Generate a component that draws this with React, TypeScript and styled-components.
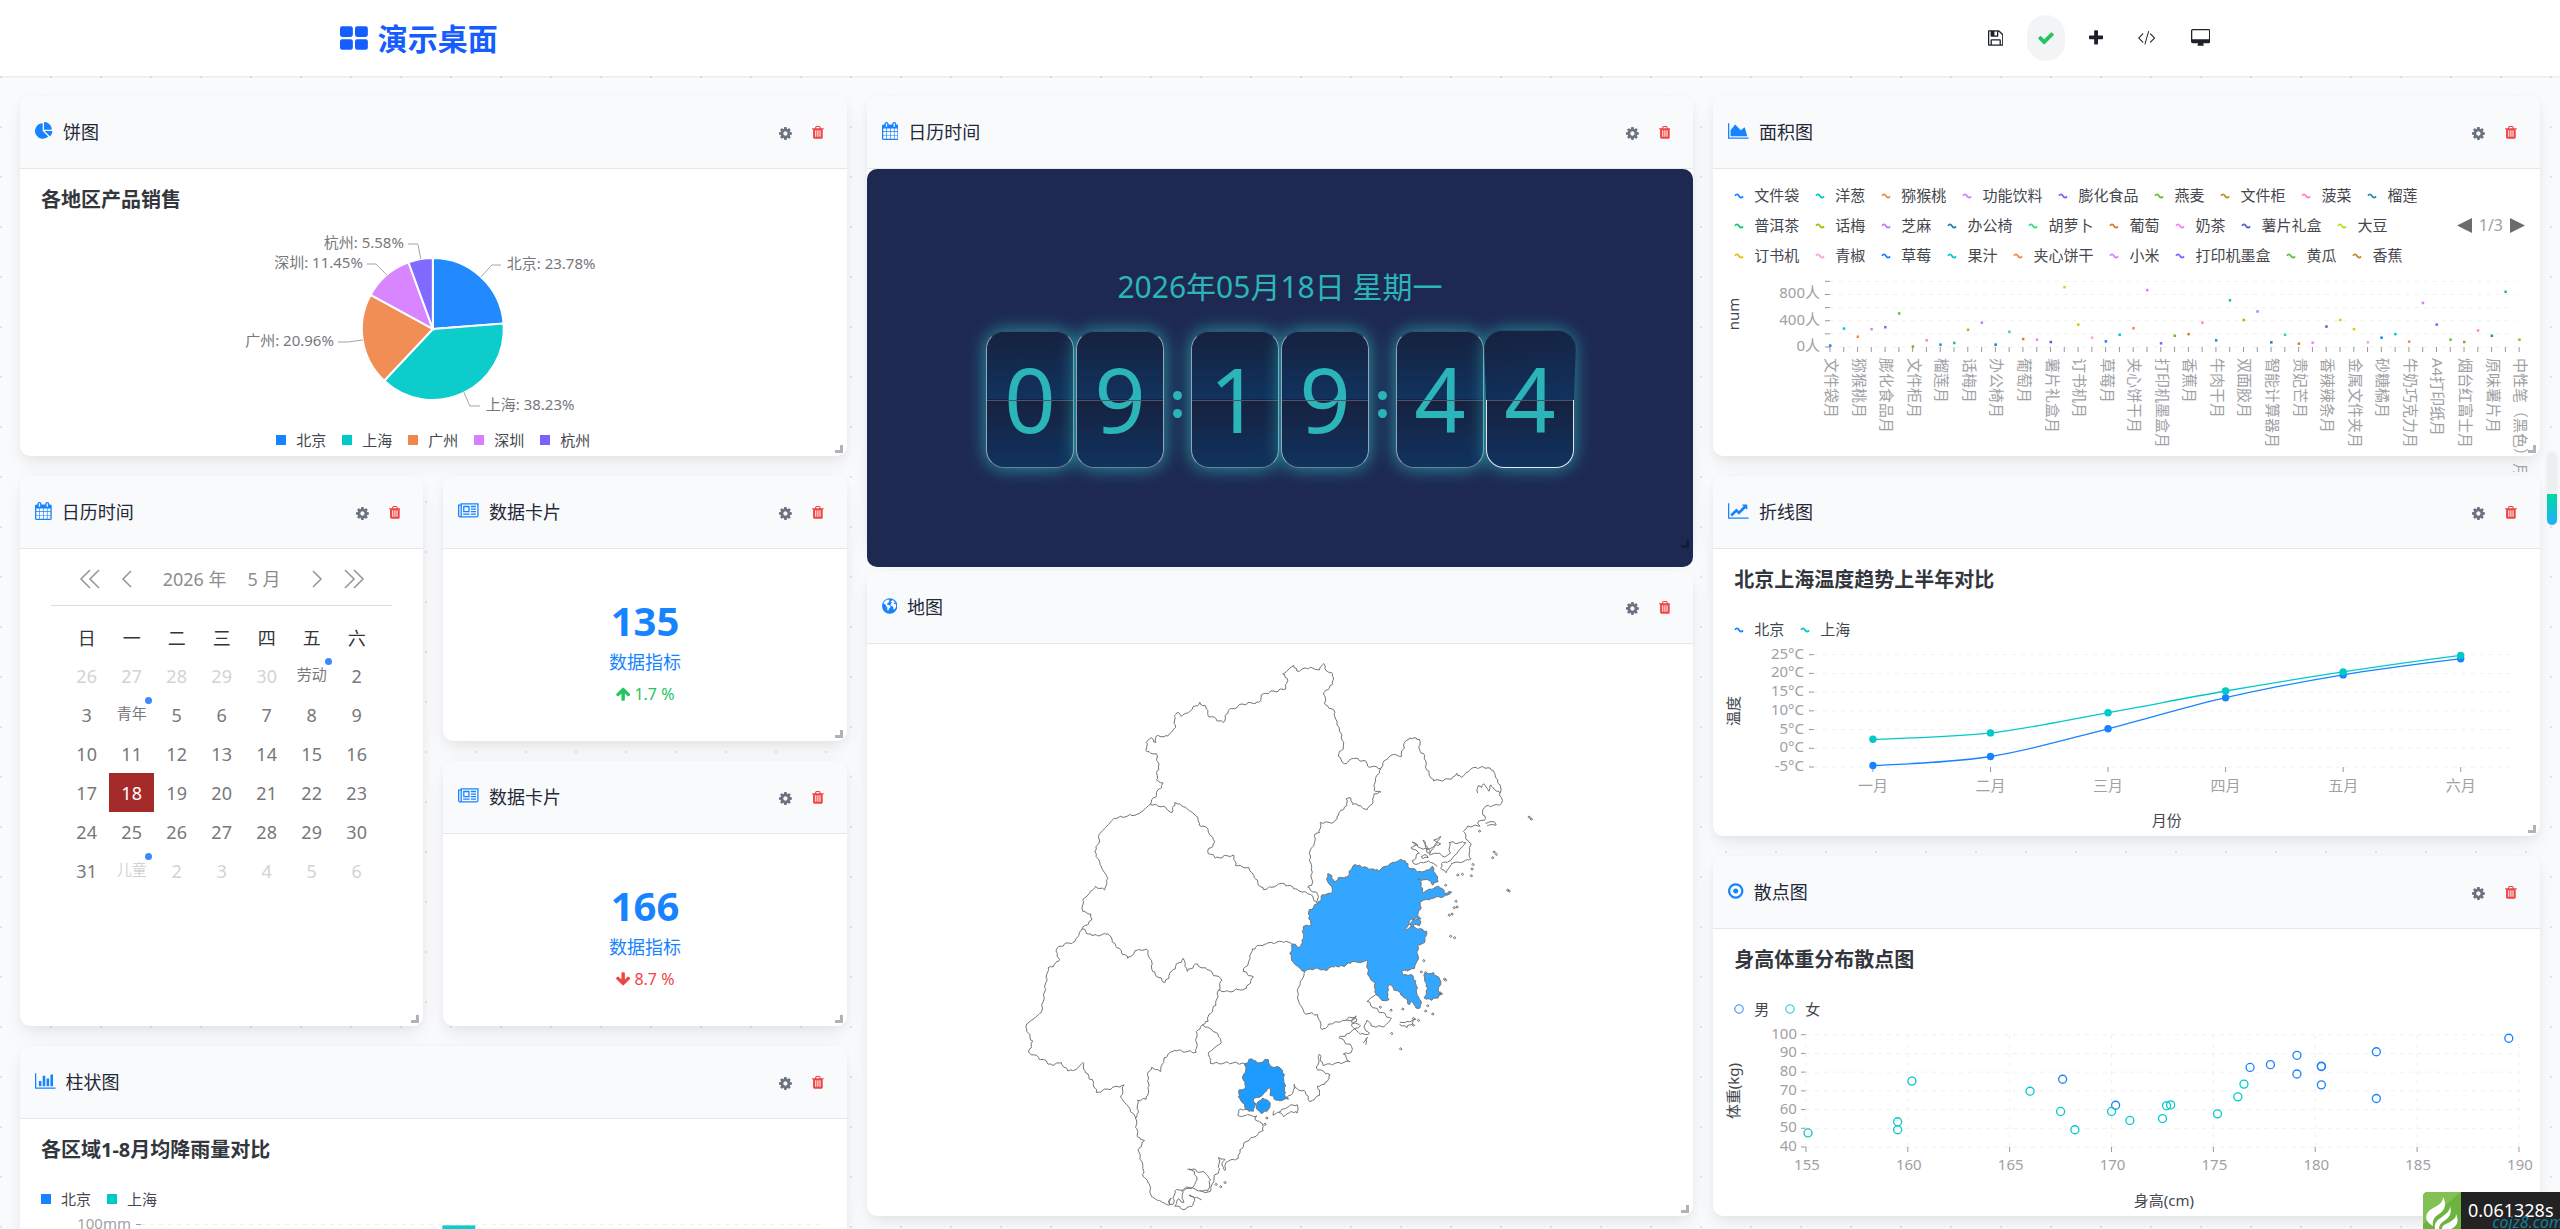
import { styled, createGlobalStyle, css } from 'styled-components';
import { useState } from 'react';
import type { ReactNode } from 'react';

const GlobalStyle = createGlobalStyle`
    * {
        box-sizing: border-box;
    }

    body {
        margin: 0;
        font-family: 'Noto Sans', 'Noto Sans CJK SC', sans-serif;
        font-size: 18px;
        color: #1f2937;
        background: #f9fafb;
    }

    button {
        border: none;
        background: none;
        padding: 0;
        font: inherit;
        color: inherit;
        cursor: pointer;
    }
`;

const BLUE = '#1783ff';
const TEAL = '#00c9c9';

const PALETTE = [
    '#1783ff', '#00c9c9', '#f0884d', '#d580ff', '#7863ff',
    '#60c42d', '#bd8f24', '#ff80ca', '#2491b3', '#17c76f',
    '#aaba01', '#bc7cfc', '#237cbc', '#2de379', '#ce8032',
    '#ff7af4', '#545fd3', '#afe410', '#d8c608', '#ffa1e0',
];

/* ---------- icons ---------- */

const ICONS = {
    calendar: { w: 1664, d: 'M128 1664h288v-288h-288v288zm352 0h320v-288h-320v288zm-352-352h288v-320h-288v320zm352 0h320v-320h-320v320zm-352-384h288v-288h-288v288zm736 736h320v-288h-320v288zm-384-736h320v-288h-320v288zm768 736h288v-288h-288v288zm-384-352h320v-320h-320v320zm-352-864v-288q0-13-9.5-22.5t-22.5-9.5h-64q-13 0-22.5 9.5t-9.5 22.5v288q0 13 9.5 22.5t22.5 9.5h64q13 0 22.5-9.5t9.5-22.5zm736 864h288v-320h-288v320zm-384-384h320v-288h-320v288zm384 0h288v-288h-288v288zm32-480v-288q0-13-9.5-22.5t-22.5-9.5h-64q-13 0-22.5 9.5t-9.5 22.5v288q0 13 9.5 22.5t22.5 9.5h64q13 0 22.5-9.5t9.5-22.5zm384-64v1280q0 52-38 90t-90 38h-1408q-52 0-90-38t-38-90v-1280q0-52 38-90t90-38h128v-96q0-66 47-113t113-47h64q66 0 113 47t47 113v96h384v-96q0-66 47-113t113-47h64q66 0 113 47t47 113v96h128q52 0 90 38t38 90z' },
    area: { w: 2048, d: 'M2048 1536v128h-2048v-1536h128v1408h1920zm-384-1024l256 896h-1664v-576l448-576 576 576z' },
    line: { w: 2048, d: 'M2048 1536v128h-2048v-1536h128v1408h1920zm-128-1248v435q0 21-19.5 29.5t-35.5-7.5l-121-121-633 633q-10 10-23 10t-23-10l-233-233-416 416-192-192 585-585q10-10 23-10t23 10l233 233 464-464-121-121q-16-16-7.5-35.5t29.5-19.5h435q14 0 23 9t9 23z' },
    bar: { w: 2048, d: 'M640 896v512h-256v-512h256zm384-512v1024h-256v-1024h256zm1024 1152v128h-2048v-1536h128v1408h1920zm-640-896v768h-256v-768h256zm384-384v1152h-256v-1152h256z' },
    pie: { w: 1792, d: 'M768 890l546 546q-106 108-247.5 168t-298.5 60q-209 0-385.5-103t-279.5-279.5-103-385.5 103-385.5 279.5-279.5 385.5-103v762zm187 6h773q0 157-60 298.5t-168 247.5zm709-128h-768v-768q209 0 385.5 103t279.5 279.5 103 385.5z' },
    news: { w: 2048, d: 'M1024 512h-384v384h384v-384zm128 640v128h-640v-128h640zm0-768v640h-640v-640h640zm640 768v128h-512v-128h512zm0-256v128h-512v-128h512zm0-256v128h-512v-128h512zm0-256v128h-512v-128h512zm-1536 960v-960h-128v960q0 26 19 45t45 19 45-19 19-45zm1664 0v-1088h-1536v1088q0 33-11 64h1483q26 0 45-19t19-45zm128-1216v1216q0 80-56 136t-136 56h-1664q-80 0-136-56t-56-136v-1088h256v-128h1792z' },
    dot: { w: 1536, d: 'M1024 896q0 106-75 181t-181 75-181-75-75-181 75-181 181-75 181 75 75 181zm-256-544q-148 0-273 73t-198 198-73 273 73 273 198 198 273 73 273-73 198-198 73-273-73-273-198-198-273-73zm768 544q0 209-103 385.5t-279.5 279.5-385.5 103-385.5-103-279.5-279.5-103-385.5 103-385.5 279.5-279.5 385.5-103 385.5 103 279.5 279.5 103 385.5z' },
    globe: { w: 1536, d: 'M768 128a768 768 0 1 0 0 1536a768 768 0 1 0 0-1536zM560 250l150 20 40 90-70 60 60 70-110 50-90 100-60 90 120 60 130 10 130 110-40 140-110 90-60 170-70 60-60-130 10-190-120-120-20-130-150-110-80-30q40-270 400-410zM1010 270q250 110 330 330l-60 30-40-80-90 30 30 90 130 30 80 30 20 170-60 190-120 160-90-40-20-200-60-100-150-10-60-110 70-160 90-60-80-70-60 30 20-110 100-40z' },
    trash: { w: 1408, d: 'M512 1248v-704q0-14-9-23t-23-9h-64q-14 0-23 9t-9 23v704q0 14 9 23t23 9h64q14 0 23-9t9-23zm256 0v-704q0-14-9-23t-23-9h-64q-14 0-23 9t-9 23v704q0 14 9 23t23 9h64q14 0 23-9t9-23zm256 0v-704q0-14-9-23t-23-9h-64q-14 0-23 9t-9 23v704q0 14 9 23t23 9h64q14 0 23-9t9-23zm-544-992h448l-48-117q-7-9-17-11h-317q-10 2-17 11zm928 32v64q0 14-9 23t-23 9h-96v948q0 83-47 143.5t-113 60.5h-832q-66 0-113-58.5t-47-141.5v-952h-96q-14 0-23-9t-9-23v-64q0-14 9-23t23-9h309l70-167q15-37 54-63t79-26h320q40 0 79 26t54 63l70 167h309q14 0 23 9t9 23z' },
    cog: { w: 1536, d: 'M1024 896q0-106-75-181t-181-75-181 75-75 181 75 181 181 75 181-75 75-181zm512-109v222q0 12-8 23t-20 13l-185 28q-19 54-39 91 35 50 107 138 10 12 10 25t-9 23q-27 37-99 108t-94 71q-12 0-26-9l-138-108q-44 23-91 38-16 136-29 186-7 28-36 28h-222q-14 0-24.5-8.5t-11.5-21.5l-28-184q-49-16-90-37l-141 107q-10 9-25 9-14 0-25-11-126-114-165-168-7-10-7-23 0-12 8-23 15-21 51-66.5t54-70.5q-27-50-41-99l-183-27q-13-2-21-12.5t-8-23.5v-222q0-12 8-23t19-13l186-28q14-46 39-92-40-57-107-138-10-12-10-24 0-10 9-23 26-36 98.5-107.5t94.5-71.5q13 0 26 10l138 107q44-23 91-38 16-136 29-186 7-28 36-28h222q14 0 24.5 8.5t11.5 21.5l28 184q49 16 90 37l142-107q9-9 24-9 13 0 25 10 129 119 165 170 7 8 7 22 0 12-8 23-15 21-51 66.5t-54 70.5q26 50 41 98l183 28q13 2 21 12.5t8 23.5z' },
    save: { w: 1536, d: 'M384 1536h768v-384h-768v384zm896 0h128v-896q0-14-10-38.5t-20-34.5l-281-281q-10-10-34-20t-39-10v416q0 40-28 68t-68 28h-576q-40 0-68-28t-28-68v-416h-128v1280h128v-416q0-40 28-68t68-28h832q40 0 68 28t28 68v416zm-384-928v-320q0-13-9.5-22.5t-22.5-9.5h-192q-13 0-22.5 9.5t-9.5 22.5v320q0 13 9.5 22.5t22.5 9.5h192q13 0 22.5-9.5t9.5-22.5zm640 32v928q0 40-28 68t-68 28h-1344q-40 0-68-28t-28-68v-1344q0-40 28-68t68-28h928q40 0 88 20t76 48l280 280q28 28 48 76t20 88z' },
    check: { w: 1792, d: 'M1671 566q0 40-28 68l-724 724-136 136q-28 28-68 28t-68-28l-136-136-362-362q-28-28-28-68t28-68l136-136q28-28 68-28t68 28l294 295 656-657q28-28 68-28t68 28l136 136q28 28 28 68z' },
    plus: { w: 1408, d: 'M1408 736v192q0 40-28 68t-68 28h-416v416q0 40-28 68t-68 28h-192q-40 0-68-28t-28-68v-416h-416q-40 0-68-28t-28-68v-192q0-40 28-68t68-28h416v-416q0-40 28-68t68-28h192q40 0 68 28t28 68v416h416q40 0 68 28t28 68z' },
    code: { w: 1920, d: 'M590 1362l50-50q12-12 0-24l-394-392 394-392q12-12 0-24l-50-50q-12-12-24 0l-466 454q-12 12 0 24l466 454q12 12 24 0zM750 1530l62 18q14 4 20-12l373-1291q4-16-12-22l-62-17q-14-4-20 12l-373 1291q-4 16 12 21zM1330 1362l-50-50q-12-12 0-24l394-392-394-392q-12-12 0-24l50-50q12-12 24 0l466 454q12 12 0 24l-466 454q-12 12-24 0z' },
    desktop: { w: 1920, d: 'M1792 992v-832q0-13-9.5-22.5t-22.5-9.5h-1600q-13 0-22.5 9.5t-9.5 22.5v832q0 13 9.5 22.5t22.5 9.5h1600q13 0 22.5-9.5t9.5-22.5zm128-832v1088q0 66-47 113t-113 47h-544q0 37 16 77.5t32 71 16 43.5q0 26-19 45t-45 19h-512q-26 0-45-19t-19-45q0-14 16-44t32-70 16-78h-544q-66 0-113-47t-47-113v-1088q0-66 47-113t113-47h1600q66 0 113 47t47 113z' },
    blocks: { w: 1664, d: 'M128 256h512q128 0 128 128v384q0 128-128 128h-512q-128 0-128-128v-384q0-128 128-128zM1024 256h512q128 0 128 128v384q0 128-128 128h-512q-128 0-128-128v-384q0-128 128-128zM128 1024h512q128 0 128 128v384q0 128-128 128h-512q-128 0-128-128v-384q0-128 128-128zM1024 1024h512q128 0 128 128v384q0 128-128 128h-512q-128 0-128-128v-384q0-128 128-128z' },
    up: { w: 1664, d: 'M1579 957q0 51-37 90l-75 75q-38 38-91 38-54 0-90-38l-294-293v704q0 52-37.500 84.500t-90.500 32.500h-128q-53 0-90.500-32.500t-37.500-84.500v-704l-294 293q-36 38-90 38t-90-38l-75-75q-38-38-38-90 0-53 38-91l651-651q35-37 90-37 54 0 91 37l651 651q37 39 37 91z' },
    down: { w: 1664, d: 'M1579 832q0 53-37 90l-651 652q-39 37-91 37-53 0-90-37l-651-652q-38-36-38-90 0-53 38-91l74-75q39-37 91-37 53 0 90 37l294 294v-704q0-52 38-90t90-38h128q52 0 90 38t38 90v704l294-294q37-37 90-37 52 0 91 37l75 75q37 39 37 91z' },
};

type IconName = keyof typeof ICONS;

function Icon({ name, size = 18 }: { name: IconName; size?: number }) {
    const icon = ICONS[name];
    return (
        <svg height={size} width={(icon.w / 1792) * size} viewBox={`0 0 ${icon.w} 1792`} fill="currentColor" fillRule={name === 'globe' ? 'evenodd' : 'nonzero'} aria-hidden="true">
            <path d={icon.d} />
        </svg>
    );
}

/* ---------- page ---------- */

const Page = styled.div`
    position: relative;
    height: 100vh;
    overflow: hidden;
    background-color: #f8fafc;
    background-image:
        radial-gradient(circle at 1px 1px, #e0e3e7 1px, transparent 1px),
        radial-gradient(circle at 1px 1px, #e0e3e7 1px, transparent 1px);
    background-size: 50px 50px;
    background-position: 0 26px, 25px 1px;
`;

const TopBar = styled.header`
    position: relative;
    height: 76px;
    background: #fff;
    box-shadow: 0 1px 2px rgba(0, 0, 0, 0.08);
`;

const TopBarInner = styled.div`
    display: flex;
    align-items: center;
    justify-content: space-between;
    height: 100%;
    max-width: 1880px;
    margin: 0 auto;
`;

const Brand = styled.h1`
    display: flex;
    align-items: center;
    gap: 10px;
    margin: 0;
    padding-bottom: 3px;
    font-size: 30px;
    font-weight: 700;
    color: #165dff;
`;

const Tools = styled.nav`
    display: flex;
    gap: 14px;
`;

const ToolButton = styled.button<{ $active?: boolean }>`
    display: flex;
    align-items: center;
    height: 46px;
    padding: 0 10px;
    border-radius: 23px;
    background: ${(p) => (p.$active ? '#f3f4f6' : 'transparent')};
    color: ${(p) => (p.$active ? '#22c55e' : '#1d2129')};
`;

const Board = styled.main`
    display: grid;
    grid-template-columns: repeat(6, 1fr);
    grid-auto-rows: 75px;
    gap: 20px;
    padding: 20px;
`;

const Card = styled.section<{ $area: string }>`
    position: relative;
    grid-area: ${(p) => p.$area};
    display: flex;
    flex-direction: column;
    min-width: 0;
    background: #fff;
    border-radius: 10px;
    box-shadow: 0 10px 20px -3px rgba(0, 0, 0, 0.07), 0 2px 10px rgba(0, 0, 0, 0.04);
`;

const CardHeader = styled.header`
    display: flex;
    flex: none;
    align-items: center;
    justify-content: space-between;
    height: 73px;
    padding: 0 23px 0 15px;
    background: #f9fafb;
    border-bottom: 1px solid #e5e7eb;
    border-radius: 10px 10px 0 0;
`;

const CardTitle = styled.h2`
    display: flex;
    align-items: center;
    gap: 10px;
    margin: 0;
    padding-bottom: 3px;
    font-size: 18px;
    font-weight: 400;

    svg {
        color: ${BLUE};
    }
`;

const CardActions = styled.div`
    display: flex;
    gap: 20px;
    padding-top: 2px;
`;

const ActionButton = styled.button<{ $danger?: boolean }>`
    display: flex;
    color: ${(p) => (p.$danger ? '#ef4444' : '#6b7280')};
`;

const CardBody = styled.div`
    flex: 1;
    min-height: 0;
`;

const ResizeHandle = styled.span<{ $dark?: boolean }>`
    position: absolute;
    right: 4px;
    bottom: 3px;
    width: 8px;
    height: 8px;
    border: solid ${(p) => (p.$dark ? '#151c3a' : '#b0b2b5')};
    border-width: 0 3px 3px 0;
`;

interface WidgetProps {
    area: string;
    icon: IconName;
    title: string;
    dark?: boolean;
    children: ReactNode;
}

function Widget({ area, icon, title, dark, children }: WidgetProps) {
    return (
        <Card $area={area}>
            <CardHeader>
                <CardTitle>
                    <Icon name={icon} />
                    {title}
                </CardTitle>
                <CardActions>
                    <ActionButton aria-label="设置"><Icon name="cog" size={15} /></ActionButton>
                    <ActionButton $danger aria-label="删除"><Icon name="trash" size={15} /></ActionButton>
                </CardActions>
            </CardHeader>
            <CardBody>{children}</CardBody>
            <ResizeHandle $dark={dark} />
        </Card>
    );
}

/* ---------- chart parts ---------- */

const ChartHead = styled.div`
    padding: 18px 21px 1px;
`;

const ChartTitle = styled.h3`
    margin: 0;
    font-size: 20px;
    line-height: 26px;
    font-weight: 700;
    color: #33373d;
`;

const LegendRow = styled.ul<{ $spaced?: boolean; $center?: boolean }>`
    display: flex;
    gap: 16px;
    margin: ${(p) => (p.$spaced ? '26px 0 0' : '0')};
    padding: 0;
    list-style: none;
    font-size: 15px;
    line-height: 20px;
    color: #44474d;
    white-space: nowrap;
    ${(p) => p.$center && css`
        justify-content: center;
    `}
`;

const LegendItem = styled.li`
    display: flex;
    align-items: center;
    gap: 10px;
`;

const Plot = styled.svg`
    display: block;
    width: 100%;
    font-size: 15px;
    fill: #a0a1a4;

    .axis-title {
        fill: #44474d;
    }

    .grid {
        stroke: #f0f0f1;
        stroke-width: 1;
        stroke-dasharray: 4 5;
    }

    .tick {
        stroke: #97989b;
        stroke-width: 1;
    }
`;

type MarkerKind = 'square' | 'wave' | 'ring';

function Marker({ kind, color }: { kind: MarkerKind; color: string }) {
    return (
        <svg width="10" height="10" viewBox="0 0 10 10" aria-hidden="true">
            {kind === 'square' && <rect width="10" height="10" fill={color} />}
            {kind === 'wave' && <path d="M1 5.800Q3 3 5 6T9 6.400" fill="none" stroke={color} strokeWidth="1.800" />}
            {kind === 'ring' && <circle cx="5" cy="5" r="4.200" fill="none" stroke={color} />}
        </svg>
    );
}

interface LegendProps {
    names: string[];
    kind: MarkerKind;
    offset?: number;
    spaced?: boolean;
    center?: boolean;
}

function Legend({ names, kind, offset = 0, spaced, center }: LegendProps) {
    return (
        <LegendRow $spaced={spaced} $center={center}>
            {names.map((name, i) => (
                <LegendItem key={name}>
                    <Marker kind={kind} color={PALETTE[(i + offset) % PALETTE.length]} />
                    {name}
                </LegendItem>
            ))}
        </LegendRow>
    );
}

/* ---------- pie ---------- */

const PIE = [
    { name: '北京', value: 23.78, line: '461,108 472,96 481,96', x: 487, y: 100, anchor: 'start' },
    { name: '上海', value: 38.23, line: '444,223 450,237 460,237', x: 466, y: 241, anchor: 'start' },
    { name: '广州', value: 20.96, line: '343,171 328,173 318,173', x: 314, y: 177, anchor: 'end' },
    { name: '深圳', value: 11.45, line: '367,106 356,95 347,95', x: 343, y: 99, anchor: 'end' },
    { name: '杭州', value: 5.58, line: '401,90 398,75 388,75', x: 384, y: 79, anchor: 'end' },
] as const;

function slicePath(cx: number, cy: number, r: number, from: number, to: number) {
    const a = from * 2 * Math.PI - Math.PI / 2;
    const b = to * 2 * Math.PI - Math.PI / 2;
    const large = to - from > 0.5 ? 1 : 0;
    return `M${cx} ${cy}L${cx + r * Math.cos(a)} ${cy + r * Math.sin(a)}A${r} ${r} 0 ${large} 1 ${cx + r * Math.cos(b)} ${cy + r * Math.sin(b)}Z`;
}

function PieChart() {
    let sum = 0;
    return (
        <>
            <ChartHead>
                <ChartTitle>各地区产品销售</ChartTitle>
            </ChartHead>
            <Plot viewBox="0 45 827 216" height="216">
                {PIE.map((p, i) => {
                    const from = sum / 100;
                    sum += p.value;
                    return (
                        <g key={p.name}>
                            <path d={slicePath(413, 160, 71, from, sum / 100)} fill={PALETTE[i]} fillOpacity="0.95" stroke="#fff" strokeWidth="2" />
                            <polyline points={p.line} fill="none" stroke="#a3a4a7" />
                            <text x={p.x} y={p.y} textAnchor={p.anchor} fill="#77787c">{`${p.name}: ${p.value}%`}</text>
                        </g>
                    );
                })}
            </Plot>
            <Legend names={PIE.map((p) => p.name)} kind="square" center />
        </>
    );
}

/* ---------- bar ---------- */

const RAIN = [
    [18.9, 12.4], [28.8, 23.2], [39.3, 34.5], [81.4, 99.7],
    [47, 52.6], [20.3, 35.5], [24, 37.4], [35.6, 42.4],
];

function BarChart() {
    return (
        <>
            <ChartHead>
                <ChartTitle>各区域1-8月均降雨量对比</ChartTitle>
                <Legend names={['北京', '上海']} kind="square" spaced />
            </ChartHead>
            <Plot viewBox="0 91 827 196" height="196">
                <text x="111" y="110" textAnchor="end">100mm</text>
                <line className="tick" x1="116" x2="121" y1="105.500" y2="105.500" />
                <line className="grid" x1="121" x2="805" y1="105.500" y2="105.500" />
                {RAIN.map((pair, m) => pair.map((v, s) => (
                    <rect key={`${m}-${s}`} x={128 + m * 85.5 + s * 38} y={218 - v * 1.12} width="33" height={v * 1.12} fill={PALETTE[s]} fillOpacity="0.95" />
                )))}
            </Plot>
        </>
    );
}

/* ---------- line ---------- */

const MONTHS = ['一月', '二月', '三月', '四月', '五月', '六月'];
const TEMPS = [
    { color: BLUE, values: [-4.6, -2.2, 5.2, 13.5, 19.6, 23.9] },
    { color: TEAL, values: [2.4, 4.1, 9.5, 15.3, 20.4, 24.8] },
];

const monthX = (i: number) => 160 + i * 117.6;
const tempY = (v: number) => 218 - (v + 5) * 3.745;

// cubic through evenly spaced points, flattened a little at both ends
function smoothPath(points: number[][]) {
    const slopes = points.slice(1).map((p, i) => (p[1] - points[i][1]) / (p[0] - points[i][0]));
    const tangents = points.map((_, i) => {
        if (i === 0) return slopes[0] * 0.6;
        if (i === points.length - 1) return slopes[i - 1] * 0.9;
        return (slopes[i - 1] + slopes[i]) / 2;
    });
    return points.map((p, i) => {
        if (i === 0) return `M${p[0]} ${p[1]}`;
        const q = points[i - 1];
        const dx = (p[0] - q[0]) / 3;
        return `C${q[0] + dx} ${q[1] + dx * tangents[i - 1]} ${p[0] - dx} ${p[1] - dx * tangents[i]} ${p[0]} ${p[1]}`;
    }).join('');
}

function LineChart() {
    return (
        <>
            <ChartHead>
                <ChartTitle>北京上海温度趋势上半年对比</ChartTitle>
                <Legend names={['北京', '上海']} kind="wave" spaced />
            </ChartHead>
            <Plot viewBox="0 91 827 196" height="196">
                {[25, 20, 15, 10, 5, 0, -5].map((t) => (
                    <g key={t}>
                        <text x="91" y={tempY(t) + 4} textAnchor="end">{`${t}°C`}</text>
                        <line className="tick" x1="96" x2="101" y1={tempY(t)} y2={tempY(t)} />
                        <line className="grid" x1="101" x2="804" y1={tempY(t)} y2={tempY(t)} />
                    </g>
                ))}
                {MONTHS.map((m, i) => (
                    <g key={m}>
                        <line className="tick" x1={monthX(i)} x2={monthX(i)} y1="218" y2="223" />
                        <text x={monthX(i)} y="242" textAnchor="middle">{m}</text>
                    </g>
                ))}
                {TEMPS.map((s) => (
                    <g key={s.color}>
                        <path d={smoothPath(s.values.map((v, i) => [monthX(i), tempY(v)]))} fill="none" stroke={s.color} strokeWidth="1.300" />
                        {s.values.map((v, i) => <circle key={v} cx={monthX(i)} cy={tempY(v)} r="3.700" fill={s.color} />)}
                    </g>
                ))}
                <text className="axis-title" x="454" y="277" textAnchor="middle">月份</text>
                <text className="axis-title" textAnchor="middle" transform="translate(26 162) rotate(-90)">温度</text>
            </Plot>
        </>
    );
}

/* ---------- scatter ---------- */

const MEN = [
    [167.6, 76.2], [170.2, 62.3], [176.8, 82.5], [177.8, 84], [179.1, 89], [179.1, 79],
    [180.3, 83], [180.3, 83.2], [180.3, 73.2], [183, 90.9], [183, 65.9], [189.5, 98.1],
];
const WOMEN = [
    [155.1, 47.5], [159.5, 53.5], [159.5, 49.2], [160.2, 75.2], [166, 69.8], [167.5, 59],
    [168.2, 49.2], [170, 59], [170.9, 54.2], [172.5, 55.2], [172.7, 62], [172.9, 62.5],
    [175.2, 57.7], [176.2, 66.8], [176.5, 73.6],
];

const heightX = (v: number) => 93 + (v - 155) * 20.38;
const weightY = (v: number) => 218 - (v - 40) * 1.872;

function ScatterChart() {
    return (
        <>
            <ChartHead>
                <ChartTitle>身高体重分布散点图</ChartTitle>
                <Legend names={['男', '女']} kind="ring" spaced />
            </ChartHead>
            <Plot viewBox="0 91 827 196" height="196">
                {[100, 90, 80, 70, 60, 50, 40].map((w) => (
                    <g key={w}>
                        <text x="84" y={weightY(w) + 4} textAnchor="end">{w}</text>
                        <line className="tick" x1="88" x2="93" y1={weightY(w)} y2={weightY(w)} />
                        <line className="grid" x1="93" x2="806" y1={weightY(w)} y2={weightY(w)} />
                    </g>
                ))}
                {[155, 160, 165, 170, 175, 180, 185, 190].map((h) => (
                    <g key={h}>
                        <line className="grid" x1={heightX(h)} x2={heightX(h)} y1="106" y2="218" />
                        <line className="tick" x1={heightX(h)} x2={heightX(h)} y1="218" y2="223" />
                        <text x={heightX(h) + 1} y="241" textAnchor="middle">{h}</text>
                    </g>
                ))}
                {[MEN, WOMEN].map((set, s) => set.map((p, i) => (
                    <circle key={`${s}-${i}`} cx={heightX(p[0])} cy={weightY(p[1])} r="4" fill="none" stroke={PALETTE[s]} strokeWidth="1.300" />
                )))}
                <text className="axis-title" x="451" y="277" textAnchor="middle">身高(cm)</text>
                <text className="axis-title" textAnchor="middle" transform="translate(26 162) rotate(-90)">体重(kg)</text>
            </Plot>
        </>
    );
}

/* ---------- area ---------- */

const GOODS_ROWS = [
    ['文件袋', '洋葱', '猕猴桃', '功能饮料', '膨化食品', '燕麦', '文件柜', '菠菜', '榴莲'],
    ['普洱茶', '话梅', '芝麻', '办公椅', '胡萝卜', '葡萄', '奶茶', '薯片礼盒', '大豆'],
    ['订书机', '青椒', '草莓', '果汁', '夹心饼干', '小米', '打印机墨盒', '黄瓜', '香蕉'],
];
const GOODS_AXIS = [
    '文件袋月', '猕猴桃月', '膨化食品月', '文件柜月', '榴莲月', '话梅月', '办公椅月', '葡萄月', '薯片礼盒月',
    '订书机月', '草莓月', '夹心饼干月', '打印机墨盒月', '香蕉月', '牛肉干月', '双面胶月', '智能计算器月',
    '贵妃芒月', '香辣辣条月', '金属文件夹月', '砂糖橘月', '牛奶巧克力月', 'A4打印纸月', '烟台红富士月',
    '原味薯片月', '中性笔（黑色）月',
];
const GOODS_VALUES = [
    25, 285, 160, 275, 305, 515, 10, 105, 40, 65, 265, 375, 40, 235, 125, 115, 80,
    915, 345, 145, 90, 190, 290, 870, 60, 175, 200, 375, 105, 715, 415, 545, 75, 190,
    55, 70, 315, 415, 275, 75, 145, 200, 85, 675, 345, 115, 80, 255, 175, 845, 115,
];

const goodsX = (i: number) => 117 + i * 13.79;
const goodsY = (v: number) => 178 - v * 0.0657;

const AreaHead = styled.div`
    display: flex;
    align-items: center;
    justify-content: space-between;
    padding: 16px 15px 1px 21px;
`;

const LegendStack = styled.div`
    display: flex;
    flex-direction: column;
    gap: 10px;
`;

const Pager = styled.div`
    display: flex;
    align-items: center;
    gap: 7px;
    font-size: 16px;
    line-height: 20px;
    color: #a0a1a4;
`;

const PagerButton = styled.button`
    display: flex;
    color: #6b6c70;
`;

function AreaChart() {
    const [page, setPage] = useState(1);

    return (
        <>
            <AreaHead>
                <LegendStack>
                    {GOODS_ROWS.map((row, i) => <Legend key={row[0]} names={row} kind="wave" offset={i * 9} />)}
                </LegendStack>
                <Pager>
                    <PagerButton aria-label="上一页" onClick={() => setPage(Math.max(1, page - 1))}>
                        <svg width="15" height="15" viewBox="0 0 14 14"><path d="M14 0v14L0 7z" fill="currentColor" /></svg>
                    </PagerButton>
                    {page}/3
                    <PagerButton aria-label="下一页" onClick={() => setPage(Math.min(3, page + 1))}>
                        <svg width="15" height="15" viewBox="0 0 14 14"><path d="M0 0v14l14-7z" fill="currentColor" /></svg>
                    </PagerButton>
                </Pager>
            </AreaHead>
            <Plot viewBox="0 97 827 206" height="206">
                {[0, 200, 400, 600, 800, 1000].map((v) => (
                    <g key={v}>
                        {v % 400 === 0 && <text x="107" y={goodsY(v) + 4} textAnchor="end">{v}人</text>}
                        <line className="tick" x1="112" x2="117" y1={goodsY(v)} y2={goodsY(v)} />
                        <line className="grid" x1="117" x2="803" y1={goodsY(v)} y2={goodsY(v)} />
                    </g>
                ))}
                {GOODS_VALUES.map((v, i) => (
                    <g key={i}>
                        <line className="tick" x1={goodsX(i)} x2={goodsX(i)} y1="178" y2="183" />
                        <rect x={goodsX(i) - 1} y={goodsY(v) - 1} width="2.500" height="2.500" fill={PALETTE[i % 20]} />
                    </g>
                ))}
                {GOODS_AXIS.map((name, i) => (
                    <text key={name} transform={`translate(${goodsX(i * 2) - 4} 189) rotate(90)`}>{name}</text>
                ))}
                <text className="axis-title" textAnchor="middle" transform="translate(26 145) rotate(-90)">num</text>
            </Plot>
        </>
    );
}

/* ---------- calendar ---------- */

const CalendarBox = styled.div`
    padding: 0 31px;
`;

const CalendarNav = styled.div`
    display: flex;
    justify-content: center;
    gap: 31px;
    padding: 17px 0 13px;
    border-bottom: 1px solid #dcdfe2;
    line-height: 26px;
    color: #8c8d90;
    white-space: nowrap;
`;

const NavGroup = styled.div`
    display: flex;
    align-items: center;
    gap: 21px;
`;

const NavButton = styled.button`
    display: flex;

    svg {
        fill: none;
        stroke: #97989b;
        stroke-width: 1.6;
    }
`;

const CalendarTable = styled.table`
    margin: 11px auto 0;
    border-collapse: collapse;
    table-layout: fixed;
    width: 315px;
`;

const WeekCell = styled.th`
    height: 39px;
    padding: 0;
    font-weight: 400;
    color: #33353a;
`;

const DayCell = styled.td<{ $muted: boolean; $today: boolean }>`
    position: relative;
    height: 39px;
    padding: 0;
    text-align: center;
    line-height: 26px;
    color: ${(p) => (p.$today ? '#fff' : p.$muted ? '#d3d3d5' : '#77787b')};
    background: ${(p) => (p.$today ? '#a52a2a' : 'transparent')};
`;

const Holiday = styled.span`
    display: block;
    font-size: 15px;
    line-height: 22px;
    padding-bottom: 4px;

    &::after {
        content: '';
        position: absolute;
        top: 2px;
        right: 2px;
        width: 7px;
        height: 7px;
        border-radius: 50%;
        background: #4086ff;
    }
`;

const WEEK = ['日', '一', '二', '三', '四', '五', '六'];
const HOLIDAYS: Record<number, string> = { 5: '劳动', 8: '青年', 36: '儿童' };

function dayNumber(i: number) {
    if (i < 5) return 26 + i;
    if (i > 35) return i - 35;
    return i - 4;
}

function Calendar() {
    return (
        <CalendarBox>
            <CalendarNav>
                <NavGroup>
                    <NavButton aria-label="上一年"><svg width="21" height="20" viewBox="0 0 21 20"><path d="M11 1L2 10l9 9M20 1l-9 9 9 9" /></svg></NavButton>
                    <NavButton aria-label="上个月"><svg width="11" height="18" viewBox="0 0 11 18"><path d="M10 1L2 9l8 8" /></svg></NavButton>
                </NavGroup>
                <NavGroup>
                    <span>2026 年</span>
                    <span>5 月</span>
                </NavGroup>
                <NavGroup>
                    <NavButton aria-label="下个月"><svg width="11" height="18" viewBox="0 0 11 18"><path d="M1 1l8 8-8 8" /></svg></NavButton>
                    <NavButton aria-label="下一年"><svg width="21" height="20" viewBox="0 0 21 20"><path d="M1 1l9 9-9 9M10 1l9 9-9 9" /></svg></NavButton>
                </NavGroup>
            </CalendarNav>
            <CalendarTable>
                <thead>
                    <tr>{WEEK.map((d) => <WeekCell key={d}>{d}</WeekCell>)}</tr>
                </thead>
                <tbody>
                    {[0, 1, 2, 3, 4, 5].map((row) => (
                        <tr key={row}>
                            {WEEK.map((_, col) => {
                                const i = row * 7 + col;
                                return (
                                    <DayCell key={i} $muted={i < 5 || i > 35} $today={i === 22}>
                                        {HOLIDAYS[i] ? <Holiday>{HOLIDAYS[i]}</Holiday> : dayNumber(i)}
                                    </DayCell>
                                );
                            })}
                        </tr>
                    ))}
                </tbody>
            </CalendarTable>
        </CalendarBox>
    );
}

/* ---------- data card ---------- */

const StatBox = styled.div`
    display: flex;
    flex-direction: column;
    align-items: center;
    justify-content: center;
    height: 100%;
    padding-top: 16px;
    color: ${BLUE};
`;

const StatNumber = styled.strong`
    font-size: 40px;
    line-height: 54px;
`;

const StatLabel = styled.span`
    line-height: 28px;
`;

const StatTrend = styled.span<{ $up: boolean }>`
    display: flex;
    align-items: center;
    gap: 4px;
    font-size: 16px;
    line-height: 36px;
    color: ${(p) => (p.$up ? '#22c55e' : '#ef4444')};
`;

function Stat({ value, percent, up }: { value: number; percent: number; up: boolean }) {
    return (
        <StatBox>
            <StatNumber>{value}</StatNumber>
            <StatLabel>数据指标</StatLabel>
            <StatTrend $up={up}>
                <Icon name={up ? 'up' : 'down'} size={16} />
                {percent} %
            </StatTrend>
        </StatBox>
    );
}

/* ---------- flip clock ---------- */

const ClockFace = styled.div`
    display: flex;
    flex-direction: column;
    align-items: center;
    justify-content: center;
    gap: 22px;
    height: 398px;
    padding-bottom: 4px;
    border-radius: 10px;
    background: #1e2952;
    color: #2cb5b9;
`;

const ClockDate = styled.div`
    font-size: 30px;
    line-height: 45px;
`;

const ClockRow = styled.div`
    display: flex;
    align-items: center;
`;

const DigitPair = styled.div`
    display: flex;
    gap: 2px;
`;

const Digit = styled.div<{ $flipping?: boolean }>`
    position: relative;
    display: flex;
    align-items: center;
    justify-content: center;
    width: 88px;
    height: 137px;
    border: 1px solid ${(p) => (p.$flipping ? '#e5e7eb' : '#97a5b8')};
    border-top-color: ${(p) => (p.$flipping ? '#10315c' : '#33506f')};
    border-bottom-color: ${(p) => (p.$flipping ? '#e5e7eb' : '#6f8096')};
    border-radius: 18px;
    background: linear-gradient(#17213f, #10335f 50%, #17213f 50%, #10335f);
    box-shadow: 0 0 18px rgba(44, 181, 185, 0.8);
    font-size: 90px;
    line-height: 1;

    ${(p) => p.$flipping && css`
        &::before {
            content: '';
            position: absolute;
            inset: -1px -1px 50%;
            border-radius: 18px 18px 0 0;
            background: linear-gradient(170deg, #17213f, #10335f);
            transform: perspective(400px) rotateX(-18deg);
            transform-origin: bottom;
        }
    `}

    &::after {
        content: '';
        position: absolute;
        left: 0;
        right: 0;
        top: 50%;
        height: 1px;
        background: #4d5468;
    }

    span {
        position: relative;
        padding-bottom: 3px;
    }
`;

const Colon = styled.div`
    display: flex;
    flex-direction: column;
    align-items: center;
    gap: 9px;
    width: 27px;
    padding-top: 9px;

    i {
        width: 9px;
        height: 9px;
        border-radius: 50%;
        background: currentColor;
    }
`;

function FlipClock() {
    return (
        <ClockFace>
            <ClockDate>2026年05月18日 星期一</ClockDate>
            <ClockRow>
                <DigitPair><Digit><span>0</span></Digit><Digit><span>9</span></Digit></DigitPair>
                <Colon><i /><i /></Colon>
                <DigitPair><Digit><span>1</span></Digit><Digit><span>9</span></Digit></DigitPair>
                <Colon><i /><i /></Colon>
                <DigitPair><Digit><span>4</span></Digit><Digit $flipping><span>4</span></Digit></DigitPair>
            </ClockRow>
        </ClockFace>
    );
}

/* ---------- map ---------- */

const BORDERS = [
    '421,440 457,383 438,375 444,340 438,305 412,300 410,275 425,263 437,275 438,258 470,258 492,235 488,205 500,195 508,206 535,190 560,168 577,182 583,203 625,222 640,190 680,173 725,168 738,145 800,133 805,105 792,93 823,70 832,85 870,75 895,82 907,65 915,85 932,92 932,120 908,142 912,175 935,188 945,230 958,255 962,285 948,312 965,332 990,318 1025,325 1030,338 1067,344',
    '1067,344 1075,325 1100,308 1125,312 1133,275 1148,263 1175,267 1175,293 1190,310 1193,343 1215,378 1265,373 1280,357 1293,368 1320,345 1355,340 1382,350 1388,368 1403,390 1400,412 1408,430 1400,442 1360,445 1352,460 1360,478 1338,490 1345,498 1310,498 1298,512 1308,535',
    '1067,344 1052,375 1048,402 1067,407 1048,412 1045,435 1028,455 1010,443 988,440 983,423 970,425 972,443 950,462 945,478 930,490 898,488 895,515 882,520 880,545 867,570 872,612 875,650 862,660 890,680 890,705',
    '421,440 457,445 482,462 490,435 520,448 555,475 558,495 577,500 602,540 582,565 603,583 655,575 660,603 697,608 712,635 738,667 792,650 828,665 870,680 890,705',
    '421,440 390,465 320,477 278,520 276,545 266,565 280,600 302,637 293,668 268,658 232,695 232,725 255,732 257,748 230,772',
    '230,772 258,790 303,785 325,818 358,850 385,828 410,825 425,860 428,885 462,915 485,880 513,850 525,885 548,865 580,880 622,908 612,935 640,938 690,930 710,900 682,885 697,858 707,825 740,812 800,805 825,815',
    '230,772 210,805 165,818 157,830 167,853 150,872 135,875 125,940 115,995 75,1025 75,1045 92,1070 80,1100 148,1135 172,1128 190,1150 215,1145 232,1127 240,1155 262,1180 270,1207 348,1187 338,1220 360,1245 380,1277',
    '612,935 605,975 585,1000 583,1018 567,1027 550,1045 550,1100 488,1095 460,1115 450,1152 425,1140 413,1160 418,1190 410,1225 385,1228 388,1260 380,1277',
    '567,1027 610,1050 620,1075 585,1100 590,1130 640,1128 685,1130',
    '380,1277 385,1325 405,1335 387,1360 400,1405 402,1432 418,1450 425,1485 455,1500 475,1507 480,1488 472,1500 485,1505 490,1470 530,1460 570,1472 590,1470 600,1435 615,1410 612,1380 630,1385 622,1400 630,1415 635,1392 668,1382 672,1360 690,1338 738,1308 735,1290 715,1280 720,1270 690,1268 668,1270 668,1255 690,1250',
    '855,885 833,935 835,960 852,995 890,1000 902,1040 925,1025 960,1015 998,1003 985,1020 1010,1030 975,1050 950,1062 985,1085 985,1100 962,1105 980,1125 905,1135 895,1105 888,1145 925,1160 910,1185 890,1190 895,1215 868,1232 855,1205 828,1195 825,1185 820,1210 805,1220',
    '1060,945 1045,952 1028,965 1060,990 1097,1010 1075,1033 1040,1030 1028,1015 1020,1035 1035,1050 1010,1052 985,1030 1000,1012 970,1015',
    '780,1260 800,1250 815,1240 833,1240 833,1262 815,1258 795,1272 780,1260 765,1268 768,1256',
    '1338,410 1340,390 1350,395 1355,385 1370,405 1375,388 1385,400 1400,410',
    '1360,490 1385,487 1390,495 1365,497',
    '1308,535 1320,545 1315,570 1320,585 1290,595 1265,597 1250,622 1235,610 1240,595 1262,590 1305,542 1258,542 1262,570 1245,580 1230,570 1205,575 1195,560 1235,545 1215,535 1235,525 1205,570 1185,535 1200,560 1175,555 1155,540 1170,548 1152,555 1160,560 1175,570 1155,590 1165,600 1200,590 1225,605',
    '1180,578 1195,575 1200,582 1185,585 1180,578',
    '525,1412 545,1418 552,1440 540,1460 510,1470 515,1500 500,1490 490,1510 520,1518 540,1508 545,1490 530,1480 565,1493',
    '530,1410 575,1422 590,1440 582,1470 560,1468',
    '1120,1020 1140,1018 1165,1012 1140,1035 1120,1025',
    '1018,1075 1030,1060 1025,1080',
];
const FUZHOU = [
    '890,705 905,680 928,678 930,660 915,640 918,625 930,630 935,645 955,635 975,635 978,618 995,600 1015,608 1045,612 1060,617 1090,600 1120,588 1135,590 1143,605 1170,620 1195,615 1212,605 1222,628 1228,645 1213,655 1208,645 1170,638 1180,650 1183,675 1228,658 1240,665 1245,677 1265,673 1245,685 1210,690 1175,700 1180,715 1170,735 1180,745 1152,745 1135,775 1150,765 1165,770 1195,778 1190,808 1170,815 1170,855 1160,878 1125,885 1130,895 1150,893 1165,910 1170,950 1180,965 1178,980 1165,982 1155,965 1148,973 1128,950 1090,920 1085,940 1090,960 1070,962 1050,940 1052,915 1040,908 1030,890 1030,858 1000,860 975,862 965,872 940,870 912,882 885,876 850,885 825,865 812,838 820,812 838,822 848,810 850,765 872,762 865,745 867,720 890,705',
    '1190,890 1215,888 1235,912 1228,935 1240,945 1210,962 1188,955 1198,930 1190,910 1190,890',
    '1147,760 1160,745 1178,750 1175,763 1147,760',
];
const XIAMEN = [
    '685,1130 705,1118 720,1128 752,1120 760,1138 785,1142 797,1160 795,1178 800,1190 797,1212 808,1225 775,1228 757,1215 755,1193 735,1215 710,1225 718,1238 710,1257 688,1252 685,1238 668,1220 668,1205 688,1192 680,1170 688,1150 685,1130',
    '720,1235 737,1222 757,1235 752,1252 735,1263 720,1252 720,1235',
];
const ISLETS = [
    [1482, 474], [1488, 479], [1384, 567], [1390, 573], [1380, 582], [1325, 600], [1322, 612], [1320, 630], [1295, 626],
    [1282, 628], [1422, 668], [1426, 671], [1248, 655], [1277, 698], [1280, 713], [1272, 715], [1258, 735], [1266, 732],
    [1262, 791], [1273, 795], [1187, 856], [1180, 886], [1192, 888], [1245, 905], [1248, 908], [1232, 945], [1198, 976],
    [1192, 990], [1212, 998], [1128, 985], [1158, 1010], [1172, 1015], [1158, 1028], [1097, 1050], [1122, 1091],
    [1095, 988], [1065, 980], [747, 1275], [742, 1292], [605, 1452], [618, 1458], [630, 1447], [1343, 511],
];

// break long segments into short jittered ones so borders look surveyed
function roughen(source: string) {
    const pts = source.split(' ').map((p) => p.split(',').map(Number));
    let out = `M${pts[0][0]} ${pts[0][1]}`;
    for (let i = 1; i < pts.length; i++) {
        const [ax, ay] = pts[i - 1];
        const [bx, by] = pts[i];
        const steps = Math.max(1, Math.round(Math.hypot(bx - ax, by - ay) / 6));
        for (let s = 1; s < steps; s++) {
            const t = s / steps;
            const jx = Math.sin(ax * 12.9 + by * 3.1 + s * 7.7) * 2.6;
            const jy = Math.sin(ay * 5.3 + bx * 9.2 + s * 4.9) * 2.6;
            out += `L${(ax + (bx - ax) * t + jx).toFixed(1)} ${(ay + (by - ay) * t + jy).toFixed(1)}`;
        }
        out += `L${bx} ${by}`;
    }
    return out;
}

const MapSvg = styled.svg`
    display: block;
    width: 100%;
    height: 100%;

    path {
        fill: none;
        stroke: #747474;
        stroke-width: 1;
        vector-effect: non-scaling-stroke;
    }
`;

const Region = styled.g<{ $fill: string }>`
    path {
        fill: ${(p) => p.$fill};
    }
`;

function RegionMap() {
    return (
        <MapSvg viewBox="0 0 827 572">
            <g transform="translate(133 -5) scale(0.3571 0.3757)">
                {BORDERS.map((b) => <path key={b} d={roughen(b)} />)}
                <Region $fill="#33a6ff">{FUZHOU.map((b) => <path key={b} d={roughen(b)} />)}</Region>
                <Region $fill="#1e9bff">{XIAMEN.map((b) => <path key={b} d={roughen(b)} />)}</Region>
                {ISLETS.map(([x, y]) => <path key={`${x}-${y}`} d={`M${x - 3} ${y}l4-3 3 4-4 2z`} />)}
            </g>
        </MapSvg>
    );
}

/* ---------- floating bits ---------- */

const ScrollTrack = styled.div`
    position: absolute;
    top: 452px;
    right: 3px;
    width: 10px;
    height: 73px;
    padding-top: 42px;
    border-radius: 5px;
    background: #eceeef;
    box-shadow: 0 0 4px rgba(0, 0, 0, 0.06);
`;

const ScrollThumb = styled.div`
    height: 31px;
    border-radius: 0 0 5px 5px;
    background: linear-gradient(#00d9a0, #1eb0ff);
`;

const TraceBadge = styled.div`
    position: absolute;
    right: 0;
    bottom: 0;
    display: flex;
    height: 37px;
    background: #232323;
    border-radius: 5px 0 0 0;
    overflow: hidden;
    color: #fff;
    line-height: 37px;
`;

const TraceTime = styled.span`
    width: 99px;
    padding-left: 7px;
`;

const SiteMark = styled.span`
    position: absolute;
    right: -3px;
    bottom: -5px;
    font-size: 16px;
    line-height: 24px;
    font-style: italic;
    color: #11809f;
`;

export default function App() {
    const [editing, setEditing] = useState(true);

    return (
        <Page>
            <GlobalStyle />
            <TopBar>
                <TopBarInner>
                    <Brand><Icon name="blocks" size={30} />演示桌面</Brand>
                    <Tools>
                        <ToolButton aria-label="保存"><Icon name="save" /></ToolButton>
                        <ToolButton aria-label="完成" $active={editing} onClick={() => setEditing(!editing)}><Icon name="check" /></ToolButton>
                        <ToolButton aria-label="添加"><Icon name="plus" /></ToolButton>
                        <ToolButton aria-label="代码"><Icon name="code" /></ToolButton>
                        <ToolButton aria-label="预览"><Icon name="desktop" /></ToolButton>
                    </Tools>
                </TopBarInner>
            </TopBar>
            <Board>
                <Widget area="1 / 1 / span 4 / span 2" icon="pie" title="饼图"><PieChart /></Widget>
                <Widget area="5 / 1 / span 6 / span 1" icon="calendar" title="日历时间"><Calendar /></Widget>
                <Widget area="5 / 2 / span 3 / span 1" icon="news" title="数据卡片"><Stat value={135} percent={1.7} up /></Widget>
                <Widget area="8 / 2 / span 3 / span 1" icon="news" title="数据卡片"><Stat value={166} percent={8.7} up={false} /></Widget>
                <Widget area="11 / 1 / span 4 / span 2" icon="bar" title="柱状图"><BarChart /></Widget>
                <Widget area="1 / 3 / span 5 / span 2" icon="calendar" title="日历时间" dark><FlipClock /></Widget>
                <Widget area="6 / 3 / span 7 / span 2" icon="globe" title="地图"><RegionMap /></Widget>
                <Widget area="5 / 5 / span 4 / span 2" icon="line" title="折线图"><LineChart /></Widget>
                <Widget area="9 / 5 / span 4 / span 2" icon="dot" title="散点图"><ScatterChart /></Widget>
                <Widget area="1 / 5 / span 4 / span 2" icon="area" title="面积图"><AreaChart /></Widget>
            </Board>
            <ScrollTrack><ScrollThumb /></ScrollTrack>
            <TraceBadge>
                <svg width="38" height="37" viewBox="0 0 38 37" aria-hidden="true">
                    <path d="M0 0h38v37H0z" fill="#6db33f" />
                    <path d="M0 0h38L0 32z" fill="#83c157" />
                    <path d="M20 5c4 8 2 13-4 17-5 3-7 7-6 12C2 30 1 23 7 18c6-4 13-6 13-13z" fill="#fff" />
                    <path d="M27 14c2 7 0 11-6 15-3 2-5 4-5 8h-4c-1-6 2-9 7-12 5-4 8-6 8-11z" fill="#fff" />
                    <path d="M33 22c3 6 2 12-5 15h-9c0-4 4-5 8-7 4-3 6-4 6-8z" fill="#fff" />
                </svg>
                <TraceTime>0.061328s</TraceTime>
                <SiteMark>cojz8.com</SiteMark>
            </TraceBadge>
        </Page>
    );
}
